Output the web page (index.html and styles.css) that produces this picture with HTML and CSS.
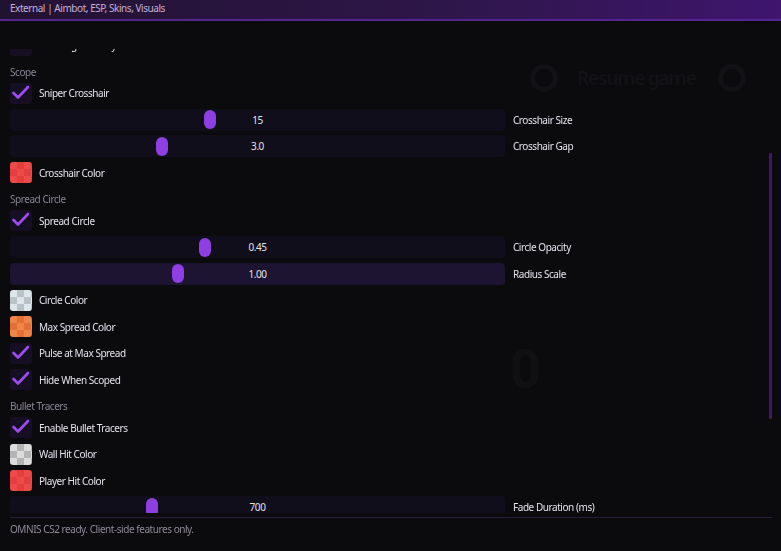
FILE: index.html
```html
<!DOCTYPE html>
<html lang="en">
<head>
    <meta charset="UTF-8">
    <title>External | Aimbot, ESP, Skins, Visuals</title>
    <link rel="stylesheet" href="styles.css">
</head>
<body>
    <div class="backdrop">
        <div class="bg-ring ring-a"></div>
        <div class="bg-text resume">Resume game</div>
        <div class="bg-ring ring-b"></div>
        <div class="bg-text score">0</div>
    </div>

    <div class="window">
        <div class="titlebar">External | Aimbot, ESP, Skins, Visuals</div>

        <div class="panel">
            <div class="scroll">
                <div class="list">
                    <div class="row">
                        <span class="check"></span>
                        <span class="label">Hide Legs Overlay</span>
                    </div>

                    <div class="section">Scope</div>
                    <div class="row">
                        <span class="check on"><svg viewBox="0 0 22 21"><polyline points="3.5,10 8,14.5 18,4"/></svg></span>
                        <span class="label">Sniper Crosshair</span>
                    </div>
                    <div class="slider-row">
                        <div class="track"><span class="thumb" style="--pos: 0.40"></span><span class="value">15</span></div>
                        <span class="label">Crosshair Size</span>
                    </div>
                    <div class="slider-row">
                        <div class="track"><span class="thumb" style="--pos: 0.30"></span><span class="value">3.0</span></div>
                        <span class="label">Crosshair Gap</span>
                    </div>
                    <div class="row">
                        <span class="swatch red"></span>
                        <span class="label">Crosshair Color</span>
                    </div>

                    <div class="section">Spread Circle</div>
                    <div class="row">
                        <span class="check on"><svg viewBox="0 0 22 21"><polyline points="3.5,10 8,14.5 18,4"/></svg></span>
                        <span class="label">Spread Circle</span>
                    </div>
                    <div class="slider-row">
                        <div class="track"><span class="thumb" style="--pos: 0.39"></span><span class="value">0.45</span></div>
                        <span class="label">Circle Opacity</span>
                    </div>
                    <div class="slider-row">
                        <div class="track active"><span class="thumb" style="--pos: 0.334"></span><span class="value">1.00</span></div>
                        <span class="label">Radius Scale</span>
                    </div>
                    <div class="row">
                        <span class="swatch white"></span>
                        <span class="label">Circle Color</span>
                    </div>
                    <div class="row">
                        <span class="swatch orange"></span>
                        <span class="label">Max Spread Color</span>
                    </div>
                    <div class="row">
                        <span class="check on"><svg viewBox="0 0 22 21"><polyline points="3.5,10 8,14.5 18,4"/></svg></span>
                        <span class="label">Pulse at Max Spread</span>
                    </div>
                    <div class="row">
                        <span class="check on"><svg viewBox="0 0 22 21"><polyline points="3.5,10 8,14.5 18,4"/></svg></span>
                        <span class="label">Hide When Scoped</span>
                    </div>

                    <div class="section">Bullet Tracers</div>
                    <div class="row">
                        <span class="check on"><svg viewBox="0 0 22 21"><polyline points="3.5,10 8,14.5 18,4"/></svg></span>
                        <span class="label">Enable Bullet Tracers</span>
                    </div>
                    <div class="row">
                        <span class="swatch gray"></span>
                        <span class="label">Wall Hit Color</span>
                    </div>
                    <div class="row">
                        <span class="swatch red"></span>
                        <span class="label">Player Hit Color</span>
                    </div>
                    <div class="slider-row">
                        <div class="track"><span class="thumb" style="--pos: 0.28"></span><span class="value">700</span></div>
                        <span class="label">Fade Duration (ms)</span>
                    </div>
                </div>
                <div class="scrollbar"></div>
            </div>

            <div class="status">OMNIS CS2 ready. Client-side features only.</div>
        </div>
    </div>
</body>
</html>
```

FILE: styles.css
```css
* {
    box-sizing: border-box;
}
html, body {
    margin: 0;
    height: 100%;
}
body {
    background-color: #0b0a0d;
    color: #e6e3ec;
    font-family: "Noto Sans", "DejaVu Sans", sans-serif;
    font-size: 10px;
    letter-spacing: -0.45px;
    overflow: hidden;
}

/* faint game menu showing through the overlay */
.backdrop {
    position: fixed;
    inset: 0;
    pointer-events: none;
}
.bg-ring {
    position: absolute;
    width: 28px;
    height: 28px;
    border: 5px solid #121115;
    border-radius: 50%;
}
.ring-a {
    left: 530px;
    top: 64px;
}
.ring-b {
    left: 718px;
    top: 64px;
}
.bg-text {
    position: absolute;
    color: #121115;
    font-weight: bold;
}
.resume {
    left: 577px;
    top: 65px;
    font-size: 19px;
    letter-spacing: -1.4px;
}
.score {
    left: 510px;
    top: 330px;
    font-size: 54px;
    letter-spacing: 0;
    color: #100f12;
}

.window {
    position: relative;
    height: 100%;
}
.titlebar {
    height: 21px;
    padding: 1px 10px 0;
    background: linear-gradient(90deg, #221232 0%, #2d1648 55%, #3f156e 100%);
    border-bottom: 2px solid #55248f;
    color: #c3b2dc;
}

.panel {
    padding: 28px 9px 0 10px;
}
.scroll {
    display: flex;
    height: 464px;
    overflow: hidden;
}
.list {
    flex: 1;
    align-self: flex-start;
    display: flex;
    flex-direction: column;
    gap: 4.5px;
    margin-top: -15px;
}
.list > * {
    flex-shrink: 0;
}
.scrollbar {
    width: 3px;
    height: 266px;
    margin-top: 104px;
    margin-left: 6px;
    background-color: #3d1869;
    border-radius: 1px;
}

.section {
    height: 11px;
    line-height: 11px;
    margin-top: 6px;
    color: #8a8494;
}
.row {
    display: flex;
    align-items: center;
    gap: 7px;
    height: 22px;
}
.check {
    width: 22px;
    height: 21px;
    border-radius: 3px;
    background-color: #160f23;
}
.check svg {
    display: block;
    width: 22px;
    height: 21px;
}
.check polyline {
    fill: none;
    stroke: #9d4cf0;
    stroke-width: 2.6;
    stroke-linecap: round;
    stroke-linejoin: round;
}
.swatch {
    width: 22px;
    height: 21px;
    border-radius: 3px;
    background-size: 14px 14px;
}
.swatch.red {
    background-image: repeating-conic-gradient(#e43e3e 0 25%, #ef4a4a 0 50%);
}
.swatch.white {
    background-image: repeating-conic-gradient(#b9c3c7 0 25%, #dfe6e9 0 50%);
}
.swatch.orange {
    background-image: repeating-conic-gradient(#e36f37 0 25%, #f08548 0 50%);
}
.swatch.gray {
    background-image: repeating-conic-gradient(#b4b4b4 0 25%, #dcdcdc 0 50%);
}

.slider-row {
    display: flex;
    align-items: center;
    gap: 8px;
    height: 22px;
}
.track {
    position: relative;
    width: 495px;
    height: 22px;
    border-radius: 4px;
    background-color: #110e1b;
    display: flex;
    align-items: center;
    justify-content: center;
}
.track.active {
    background-color: #1c1431;
}
.thumb {
    position: absolute;
    top: 1.5px;
    left: calc(2px + var(--pos) * (100% - 16px));
    width: 12px;
    height: 19px;
    border-radius: 6px;
    background-color: #8d3fe2;
}

.status {
    margin-top: 4px;
    padding-top: 4px;
    border-top: 1px solid #2a1c3c;
    color: #908a99;
}
```
